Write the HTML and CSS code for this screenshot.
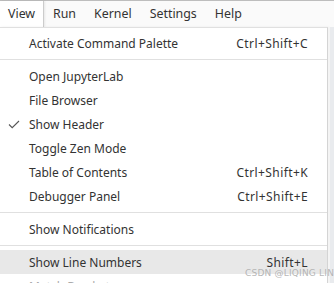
FILE: index.html
```html
<!DOCTYPE html>
<html>
<head>
<meta charset="utf-8">
<link rel="stylesheet" href="styles.css">
</head>
<body>
<div class="screen">
  <div class="menubar">
    <div class="mb-item active">View</div>
    <div class="mb-item">Run</div>
    <div class="mb-item">Kernel</div>
    <div class="mb-item">Settings</div>
    <div class="mb-item">Help</div>
  </div>
  <div class="body">
    <div class="menu">
      <div class="row"><span class="check"></span><span class="label">Activate Command Palette</span><span class="key">Ctrl+Shift+C</span></div>
      <div class="sep"></div>
      <div class="row"><span class="check"></span><span class="label">Open JupyterLab</span><span class="key"></span></div>
      <div class="row"><span class="check"></span><span class="label">File Browser</span><span class="key"></span></div>
      <div class="row"><span class="check"><svg width="12" height="9" viewBox="0 0 12 9"><path d="M1 4.5 L4.2 7.7 L11 1" fill="none" stroke="#555" stroke-width="1.1"/></svg></span><span class="label">Show Header</span><span class="key"></span></div>
      <div class="row"><span class="check"></span><span class="label">Toggle Zen Mode</span><span class="key"></span></div>
      <div class="row"><span class="check"></span><span class="label">Table of Contents</span><span class="key">Ctrl+Shift+K</span></div>
      <div class="row"><span class="check"></span><span class="label">Debugger Panel</span><span class="key">Ctrl+Shift+E</span></div>
      <div class="sep"></div>
      <div class="row"><span class="check"></span><span class="label">Show Notifications</span><span class="key"></span></div>
      <div class="sep"></div>
      <div class="row hover"><span class="check"></span><span class="label">Show Line Numbers</span><span class="key">Shift+L</span></div>
      <div class="row faded"><span class="check"></span><span class="label">Match Brackets</span><span class="key"></span></div>
    </div>
    <div class="scroll"></div>
  </div>
  <div class="watermark">CSDN @LIQING LIN</div>
</div>
</body>
</html>
```
FILE: styles.css
```css
* { box-sizing: border-box; }
html, body { margin: 0; padding: 0; }
body {
  width: 334px;
  height: 283px;
  overflow: hidden;
  background: #fff;
  font-family: "Noto Sans", "Open Sans", sans-serif;
  font-size: 12px;
  color: #333;
}
.screen {
  position: relative;
  width: 334px;
  height: 283px;
  overflow: hidden;
  display: flex;
  flex-direction: column;
}
.menubar {
  display: flex;
  height: 27px;
  border-top: 1px solid #bdbdbd;
  background: #fafafa;
  flex: none;
}
.mb-item {
  padding: 0 9px;
  line-height: 26px;
  font-size: 12.4px;
  color: #333;
}
.mb-item.active {
  background: #fff;
  border-right: 1px solid #ccc;
  box-shadow: 1px 0 2px rgba(0,0,0,0.08);
  width: 44px;
  padding-left: 8px;
}
.body {
  display: flex;
  flex: 1;
  min-height: 0;
}
.menu {
  width: 328px;
  border-top: 1px solid #e0e0e0;
  border-right: 1px solid #d4d4d4;
  background: #fff;
  padding-top: 3px;
  box-shadow: 1px 1px 3px rgba(0,0,0,0.12);
}
.scroll {
  flex: 1;
  background: #e9ebee;
  border-left: 2px solid #f4f4f4;
}
.row {
  display: flex;
  align-items: center;
  height: 24px;
}
.row.hover { background: #e8e8e8; }
.row.faded { color: #aaa; }
.check {
  width: 29px;
  flex: none;
  display: flex;
  justify-content: center;
  padding-left: 1px;
}
.check svg { margin-left: -2px; margin-top: 1px; }
.label { flex: 1; }
.key {
  padding-right: 19px;
  text-align: right;
  letter-spacing: 0.4px;
}
.sep {
  height: 1px;
  background: #e0e0e0;
  margin: 4px 0;
}
.watermark {
  position: absolute;
  left: 245px;
  top: 268px;
  font-family: "DejaVu Sans", sans-serif;
  font-size: 9px;
  color: rgba(170,170,170,0.85);
  letter-spacing: 0.2px;
  white-space: nowrap;
}
```
